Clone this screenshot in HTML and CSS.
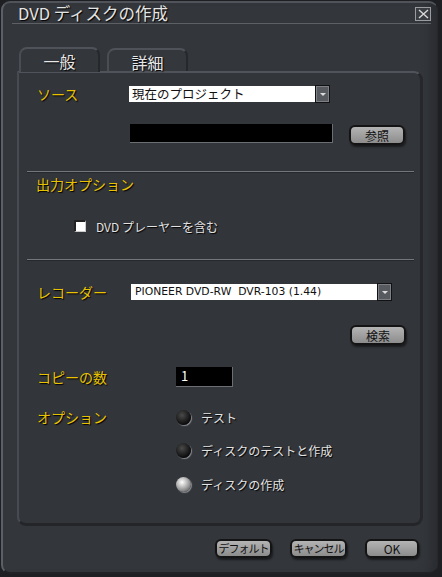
FILE: index.html
```html
<!DOCTYPE html>
<html lang="ja">
<head>
    <meta charset="UTF-8">
    <meta name="viewport" content="width=device-width, initial-scale=1.0">
    <title>DVD ディスクの作成</title>
    <link rel="stylesheet" href="styles.css">
</head>
<body>
    <div class="window">
        <div class="titlebar">
            <span class="title">DVD ディスクの作成</span>
            <button class="close">
                <svg width="11" height="10" viewBox="0 0 11 10"><path d="M1 1L10 9M10 1L1 9" stroke="#d8d8d8" stroke-width="1.4"/></svg>
            </button>
        </div>

        <div class="tabs">
            <div class="tab active">一般</div>
            <div class="tab">詳細</div>
        </div>

        <div class="panel">
            <div class="row row-source">
                <span class="label">ソース</span>
                <div class="select source-select">
                    <span class="select-text">現在のプロジェクト</span>
                    <span class="select-btn"></span>
                </div>
            </div>
            <div class="row row-path">
                <div class="path-input"></div>
                <button class="btn browse">参照</button>
            </div>

            <div class="sep sep-1"></div>

            <div class="section-label">出力オプション</div>
            <div class="check-row">
                <span class="checkbox"></span>
                <span class="text">DVD プレーヤーを含む</span>
            </div>

            <div class="sep sep-2"></div>

            <div class="row row-recorder">
                <span class="label">レコーダー</span>
                <div class="select recorder-select">
                    <span class="select-text latin">PIONEER DVD-RW&nbsp; DVR-103 (1.44)</span>
                    <span class="select-btn"></span>
                </div>
            </div>
            <div class="row row-search">
                <button class="btn search">検索</button>
            </div>

            <div class="row row-copies">
                <span class="label">コピーの数</span>
                <div class="num-input">1</div>
            </div>

            <div class="row row-options">
                <span class="label">オプション</span>
                <div class="radios">
                    <div class="radio-row"><span class="radio"></span><span class="text">テスト</span></div>
                    <div class="radio-row"><span class="radio"></span><span class="text">ディスクのテストと作成</span></div>
                    <div class="radio-row"><span class="radio on"></span><span class="text">ディスクの作成</span></div>
                </div>
            </div>
        </div>

        <div class="footer">
            <button class="btn btn-default">デフォルト</button>
            <button class="btn btn-cancel">キャンセル</button>
            <button class="btn btn-ok">OK</button>
        </div>
    </div>
</body>
</html>
```

FILE: styles.css
```css
body {
    margin: 0;
    width: 442px;
    height: 577px;
    background: #1d1f22;
    font-family: "Noto Sans CJK JP", "Noto Sans", sans-serif;
    overflow: hidden;
}
.window {
    box-sizing: border-box;
    width: 437px;
    height: 573px;
    margin-left: 1px;
    margin-top: 1px;
    background: #33363b;
    border-top: 2px solid #50545a;
    border-left: 2px solid #5c6066;
    border-right: 1px solid #26282b;
    border-bottom: 2px solid #202225;
    border-radius: 9px;
    box-shadow: inset -14px 0 10px -8px #2a2c30;
}
.titlebar {
    display: flex;
    align-items: center;
    justify-content: space-between;
    height: 20px;
    margin: 0 6px 0 9px;
    padding: 0 0 0 6px;
    border-bottom: 1px solid #5d6166;
}
.title {
    color: #e4e4e4;
    font-size: 16.5px;
    line-height: 20px;
    text-shadow: 1px 1px 1px #000;
}
.close {
    box-sizing: border-box;
    width: 16px;
    height: 14px;
    padding: 0;
    margin-top: 2px;
    display: flex;
    align-items: center;
    justify-content: center;
    background: #3a3d42;
    border: 1px solid #9a9ca0;
}

/* tabs */
.tabs {
    display: flex;
    align-items: flex-end;
    gap: 7px;
    margin: 23px 0 0 16px;
    height: 24px;
}
.tab {
    box-sizing: border-box;
    width: 81px;
    height: 23px;
    text-align: center;
    color: #e8e8e8;
    font-size: 16px;
    line-height: 24px;
    text-shadow: 1px 1px 1px #000;
    background: #34373c;
    border-top: 2px solid #4f5359;
    border-left: 2px solid #4a4e54;
    border-right: 2px solid #26282c;
    border-radius: 8px 8px 0 0;
}
.tab.active {
    height: 25px;
    position: relative;
    z-index: 1;
    margin-bottom: -1px;
    background: #33363b;
}

/* main panel */
.panel {
    box-sizing: border-box;
    height: 455px;
    margin-left: 14px;
    width: 406px;
    border-top: 2px solid #50545a;
    border-left: 2px solid #474b51;
    border-right: 3px solid #25272a;
    border-bottom: 3px solid #232528;
    border-radius: 0 9px 9px 9px;
    background: #32353a;
}
.row {
    display: flex;
    align-items: center;
    padding-left: 18px;
}
.label, .section-label {
    color: #e8c200;
    font-size: 14px;
    text-shadow: 1px 1px 1px #000;
}
.text {
    color: #e2e2e2;
    font-size: 12px;
    text-shadow: 1px 1px 1px #000;
}
.row-source {
    margin-top: 12px;
    height: 18px;
}
.row-source .label {
    width: 92px;
}
.select {
    display: flex;
    align-items: center;
    height: 18px;
}
.select-text {
    box-sizing: border-box;
    height: 16px;
    background: #fff;
    color: #111;
    font-size: 12.5px;
    line-height: 16px;
    padding-left: 3px;
    white-space: nowrap;
}
.select-text.latin {
    font-family: "DejaVu Sans", sans-serif;
    font-size: 10.8px;
    padding-left: 4px;
}
.source-select .select-text {
    width: 186px;
}
.recorder-select .select-text {
    width: 246px;
}
.select-btn {
    box-sizing: border-box;
    width: 15px;
    height: 18px;
    background: #575a5f;
    border: 1px solid #111;
    outline: 1px solid #7d8086;
    outline-offset: -2px;
    position: relative;
}
.select-btn::after {
    content: "";
    position: absolute;
    left: 4px;
    top: 7px;
    border-left: 3px solid transparent;
    border-right: 3px solid transparent;
    border-top: 3px solid #ddd;
}
.row-path {
    margin-top: 21px;
    height: 21px;
    align-items: flex-start;
    padding-left: 111px;
}
.path-input {
    width: 202px;
    height: 18px;
    background: #000;
    border-bottom: 1px solid #6b6e73;
    border-right: 1px solid #6b6e73;
}
.btn {
    box-sizing: border-box;
    height: 20px;
    padding: 0;
    background: linear-gradient(#b4b4b4, #8c8c8c);
    border: 2px solid #141414;
    border-radius: 6px;
    color: #111;
    font-family: "Noto Sans CJK JP", "Noto Sans", sans-serif;
    font-size: 12px;
    line-height: 15px;
    white-space: nowrap;
    box-shadow: 1px 2px 2px #1a1b1d;
}
.browse {
    width: 56px;
    margin-left: 16px;
    margin-top: 1px;
}
.sep {
    height: 1px;
    background: #73767b;
    margin: 0 6px 0 8px;
    box-shadow: 0 1px 0 #26282b;
}
.sep-1 {
    margin-top: 26px;
}
.section-label {
    margin: 4px 0 0 17px;
    height: 17px;
    line-height: 17px;
}
.check-row {
    display: flex;
    align-items: center;
    gap: 10px;
    height: 16px;
    margin: 25px 0 0 55px;
}
.checkbox {
    box-sizing: border-box;
    width: 12px;
    height: 12px;
    background: #fff;
    border-top: 2px solid #222;
    border-left: 2px solid #222;
    border-right: 1px solid #ccc;
    border-bottom: 1px solid #ccc;
}
.sep-2 {
    margin-top: 25px;
}
.row-recorder {
    margin-top: 23px;
    height: 18px;
}
.row-recorder .label {
    width: 94px;
}
.row-search {
    justify-content: flex-end;
    margin-top: 24px;
    padding-right: 14px;
}
.search {
    width: 56px;
}
.row-copies {
    margin-top: 22px;
    height: 20px;
}
.row-copies .label {
    width: 139px;
}
.num-input {
    box-sizing: border-box;
    width: 57px;
    height: 20px;
    background: #000;
    color: #fff;
    font-size: 13px;
    line-height: 18px;
    padding-left: 5px;
    border-bottom: 1px solid #6b6e73;
    border-right: 1px solid #6b6e73;
}
.row-options {
    align-items: flex-start;
    margin-top: 22px;
}
.row-options .label {
    width: 139px;
    line-height: 16px;
}
.radios {
    display: flex;
    flex-direction: column;
    gap: 17px;
}
.radio-row {
    display: flex;
    align-items: center;
    gap: 10px;
    height: 16px;
}
.radio-row:last-child {
    margin-top: 1px;
}
.radio {
    width: 15px;
    height: 15px;
    border-radius: 50%;
    background: radial-gradient(circle at 40% 35%, #4a4a4a, #0c0c0c 70%);
    box-shadow: 1px 1px 1px #8a8c90;
}
.radio.on {
    background: radial-gradient(circle at 40% 35%, #ffffff, #9a9a9a 55%, #3a3a3a);
}

/* bottom buttons */
.footer {
    display: flex;
    justify-content: flex-end;
    gap: 18px;
    margin: 13px 18px 0 0;
}
.btn-default, .btn-cancel {
    width: 57px;
    height: 19px;
    font-size: 11px;
    letter-spacing: -1px;
}
.btn-ok {
    width: 54px;
    height: 19px;
}
```
